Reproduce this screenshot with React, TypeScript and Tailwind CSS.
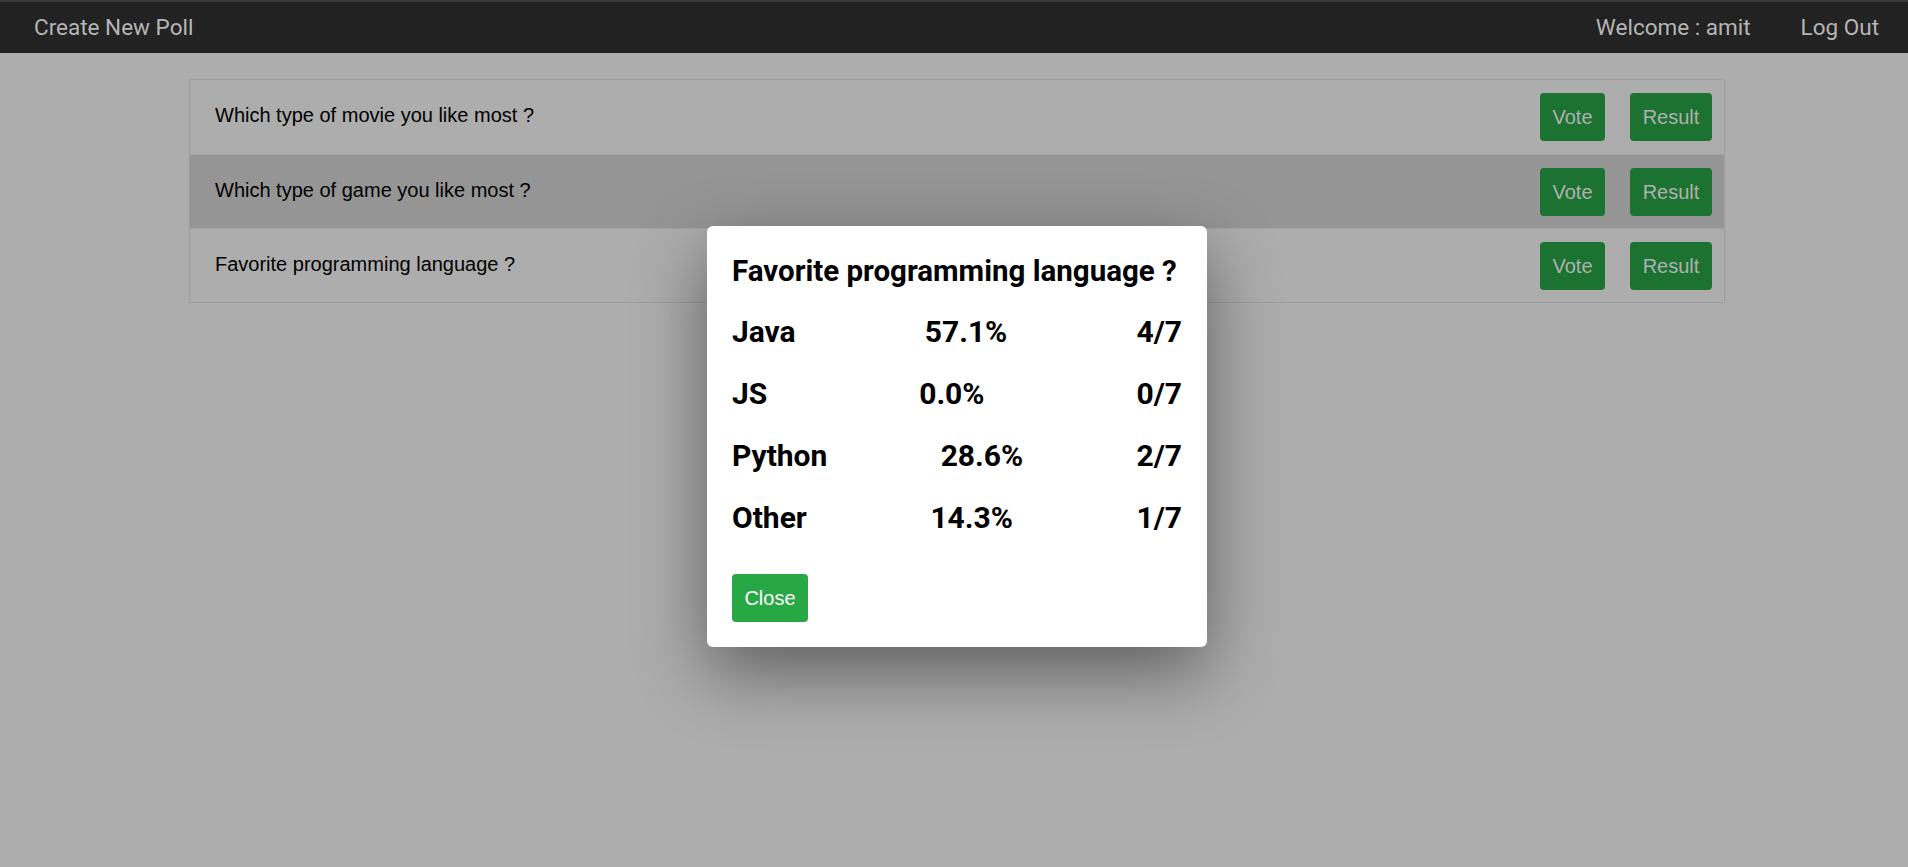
const polls = [
  { id: 1, question: "Which type of movie you like most ?" },
  { id: 2, question: "Which type of game you like most ?" },
  { id: 3, question: "Favorite programming language ?" },
];

const results = [
  { option: "Java", percent: "57.1%", count: "4/7" },
  { option: "JS", percent: "0.0%", count: "0/7" },
  { option: "Python", percent: "28.6%", count: "2/7" },
  { option: "Other", percent: "14.3%", count: "1/7" },
];

function PollRow({ question, active }: { question: string; active: boolean }) {
  return (
    <div
      className={`flex h-[74px] items-center justify-between border-t border-[#a3a3a3] pl-[25px] pr-[12px] first:border-t-0 ${
        active ? "bg-[#959595]" : "bg-[#adadad]"
      }`}
    >
      <span className="-mt-[4px] text-[20px] text-black">{question}</span>
      <div className="flex gap-[25px] text-[20px] text-[#b0b0b0]">
        <button className="h-[48px] w-[65px] rounded-[4px] bg-[#1c7331]">Vote</button>
        <button className="h-[48px] w-[82px] rounded-[4px] bg-[#1c7331]">Result</button>
      </div>
    </div>
  );
}

export default function App() {
  return (
    <div className="relative min-h-[867px] bg-[#adadad] font-['Liberation_Sans',Arial,sans-serif]">
      <nav className="flex h-[53px] items-center justify-between border-t-2 border-[#3c3c3c] bg-[#222222] pl-[34px] pr-[29px] font-['Roboto',sans-serif] text-[22.5px] text-[#b5b5b5]">
        <span>Create New Poll</span>
        <div className="flex gap-[50px]">
          <span>Welcome : amit</span>
          <span>Log Out</span>
        </div>
      </nav>

      <div className="ml-[189px] mt-[26px] w-[1536px] border border-[#9c9c9c]">
        {polls.map((p) => (
          <PollRow key={p.id} question={p.question} active={p.id === 2} />
        ))}
      </div>

      <div className="absolute left-[707px] top-[226px] w-[500px] rounded-[6px] bg-white px-[25px] pb-[25px] pt-[29px] font-['Roboto',sans-serif] text-black shadow-[0_25px_70px_rgba(0,0,0,0.45)]">
        <h2 className="whitespace-nowrap text-[29.5px] font-bold leading-[32px]">Favorite programming language ?</h2>
        <div className="mt-[14px]">
          {results.map((r) => (
            <div key={r.option} className="flex justify-between text-[30px] font-bold leading-[62px]">
              <span>{r.option}</span>
              <span>{r.percent}</span>
              <span>{r.count}</span>
            </div>
          ))}
        </div>
        <button className="mt-[25px] h-[48px] w-[76px] rounded-[4px] bg-[#28a745] font-['Liberation_Sans',Arial,sans-serif] text-[20px] text-white">
          Close
        </button>
      </div>
    </div>
  );
}
